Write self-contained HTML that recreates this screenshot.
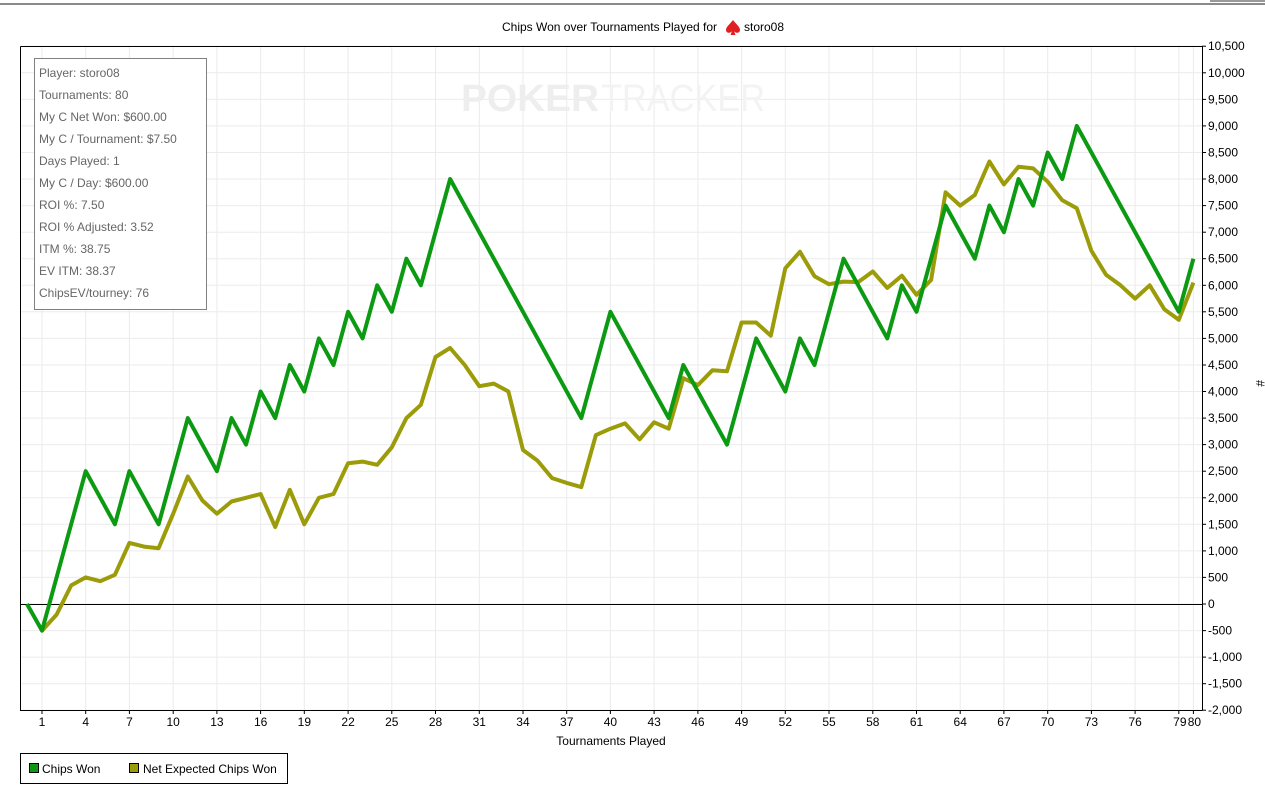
<!DOCTYPE html>
<html><head><meta charset="utf-8"><style>
html,body{margin:0;padding:0;background:#fff;width:1265px;height:789px;overflow:hidden;font-family:"Liberation Sans",sans-serif;}
#tb{position:absolute;left:0;top:0;width:1265px;height:5px;background:#fff;border-bottom:2px solid #8a8a8a;box-sizing:border-box}
#tb2{position:absolute;left:1210px;top:0;width:55px;height:2px;background:#999}
</style></head><body>
<div id="tb"></div><div id="tb2"></div>
<svg id="s" width="1265" height="789" style="position:absolute;left:0;top:0" xmlns="http://www.w3.org/2000/svg" font-family="Liberation Sans, sans-serif">
<g id="grid" stroke="#ebebeb" stroke-width="1"></g>
<text x="461" y="111" font-size="38" font-weight="bold" fill="#eeeeee" textLength="138" lengthAdjust="spacingAndGlyphs">POKER</text>
<text x="601" y="111" font-size="38" fill="#f3f3f3" textLength="164" lengthAdjust="spacingAndGlyphs">TRACKER</text>
<line x1="20" y1="604.5" x2="1202" y2="604.5" stroke="#000" stroke-width="1"/>
<polyline id="ol" fill="none" stroke="#9c9c0a" stroke-width="4" stroke-linejoin="round"/>
<polyline id="gr" fill="none" stroke="#0b9a12" stroke-width="4" stroke-linejoin="round"/>
<path d="M20.5 46.5H1202.5V710.5M20.5 46.5V710.5H1202.5" fill="none" stroke="#000"/>
<g id="ax" font-size="12" fill="#000"></g>
<text x="502" y="31" font-size="12">Chips Won over Tournaments Played for</text>
<path d="M733 20 C729 25 726 27 726 30 C726 33 730 34 732 31 L730.5 35 H735.5 L734 31 C736 34 740 33 740 30 C740 27 737 25 733 20Z" fill="#e02020"/>
<text x="744" y="31" font-size="12">storo08</text>
<text x="1256" y="380" font-size="12" transform="rotate(90 1256 380)">#</text>
<text x="611" y="745" font-size="12" text-anchor="middle">Tournaments Played</text>
<rect x="34.5" y="58.5" width="172" height="251" fill="#fff" stroke="#808080"/>
<g font-size="12" fill="#666">
<text x="39" y="77">Player: storo08</text>
<text x="39" y="99">Tournaments: 80</text>
<text x="39" y="121">My C Net Won: $600.00</text>
<text x="39" y="143">My C / Tournament: $7.50</text>
<text x="39" y="165">Days Played: 1</text>
<text x="39" y="187">My C / Day: $600.00</text>
<text x="39" y="209">ROI %: 7.50</text>
<text x="39" y="231">ROI % Adjusted: 3.52</text>
<text x="39" y="253">ITM %: 38.75</text>
<text x="39" y="275">EV ITM: 38.37</text>
<text x="39" y="297">ChipsEV/tourney: 76</text>
</g>
<rect x="20.5" y="753.5" width="267" height="30" fill="#fff" stroke="#000"/>
<rect x="29.5" y="763.5" width="9" height="9" fill="#0b9a12" stroke="#000"/>
<text x="42" y="773" font-size="12">Chips Won</text>
<rect x="129.5" y="763.5" width="9" height="9" fill="#9c9c0a" stroke="#000"/>
<text x="143" y="773" font-size="12">Net Expected Chips Won</text>
</svg>
<script>
var X=function(n){return 42+(n-1)*14.575;},Y=function(v){return 604-v*26.56/500;};
var g=document.getElementById('grid'),ax=document.getElementById('ax'),h='',a='';
for(var v=-2000;v<=10500;v+=500){var y=Y(v).toFixed(1);h+='<line x1="20" x2="1202" y1="'+y+'" y2="'+y+'"/>';
a+='<line x1="1202" x2="1206" y1="'+y+'" y2="'+y+'" stroke="#000"/><text x="1208" y="'+(Y(v)+4)+'">'+(v<0?'-':'')+Math.abs(v).toLocaleString('en-US')+'</text>';}
var ticks=[];for(var n=1;n<=79;n+=3)ticks.push(n);ticks.push(80);
ticks.forEach(function(n){var x=X(n).toFixed(1);h+='<line y1="46" y2="710" x1="'+x+'" x2="'+x+'"/>';
a+='<line y1="710" y2="714" x1="'+x+'" x2="'+x+'" stroke="#000"/><text text-anchor="middle" y="726" x="'+(n==79?X(n)+1:n==80?X(n)+1:X(n))+'">'+n+'</text>';});
g.innerHTML=h;ax.innerHTML=a;
var G=[[0,0],[1,-500],[4,2500],[6,1500],[7,2500],[9,1500],[11,3500],[13,2500],[14,3500],[15,3000],[16,4000],[17,3500],[18,4500],[19,4000],[20,5000],[21,4500],[22,5500],[23,5000],[24,6000],[25,5500],[26,6500],[27,6000],[29,8000],[38,3500],[40,5500],[44,3500],[45,4500],[48,3000],[50,5000],[52,4000],[53,5000],[54,4500],[56,6500],[59,5000],[60,6000],[61,5500],[63,7500],[65,6500],[66,7500],[67,7000],[68,8000],[69,7500],[70,8500],[71,8000],[72,9000],[79,5500],[80,6500]];
var O=[-500,-200,350,500,430,550,1150,1080,1050,1700,2400,1950,1700,1930,2000,2070,1450,2150,1500,2000,2070,2650,2680,2620,2950,3500,3750,4650,4820,4500,4100,4150,4000,2900,2700,2370,2280,2200,3180,3300,3400,3100,3420,3300,4250,4120,4400,4380,5300,5300,5050,6320,6630,6170,6020,6070,6060,6260,5950,6180,5820,6100,7750,7500,7700,8330,7900,8230,8200,7950,7600,7450,6650,6200,6000,5750,6000,5550,5350,6050];
document.getElementById('gr').setAttribute('points',G.map(function(p){return (p[0]==0?27:X(p[0])).toFixed(1)+','+Y(p[1]).toFixed(1)}).join(' '));
document.getElementById('ol').setAttribute('points',O.map(function(v,i){return X(i+1).toFixed(1)+','+Y(v).toFixed(1)}).join(' '));
</script>
</body></html>
